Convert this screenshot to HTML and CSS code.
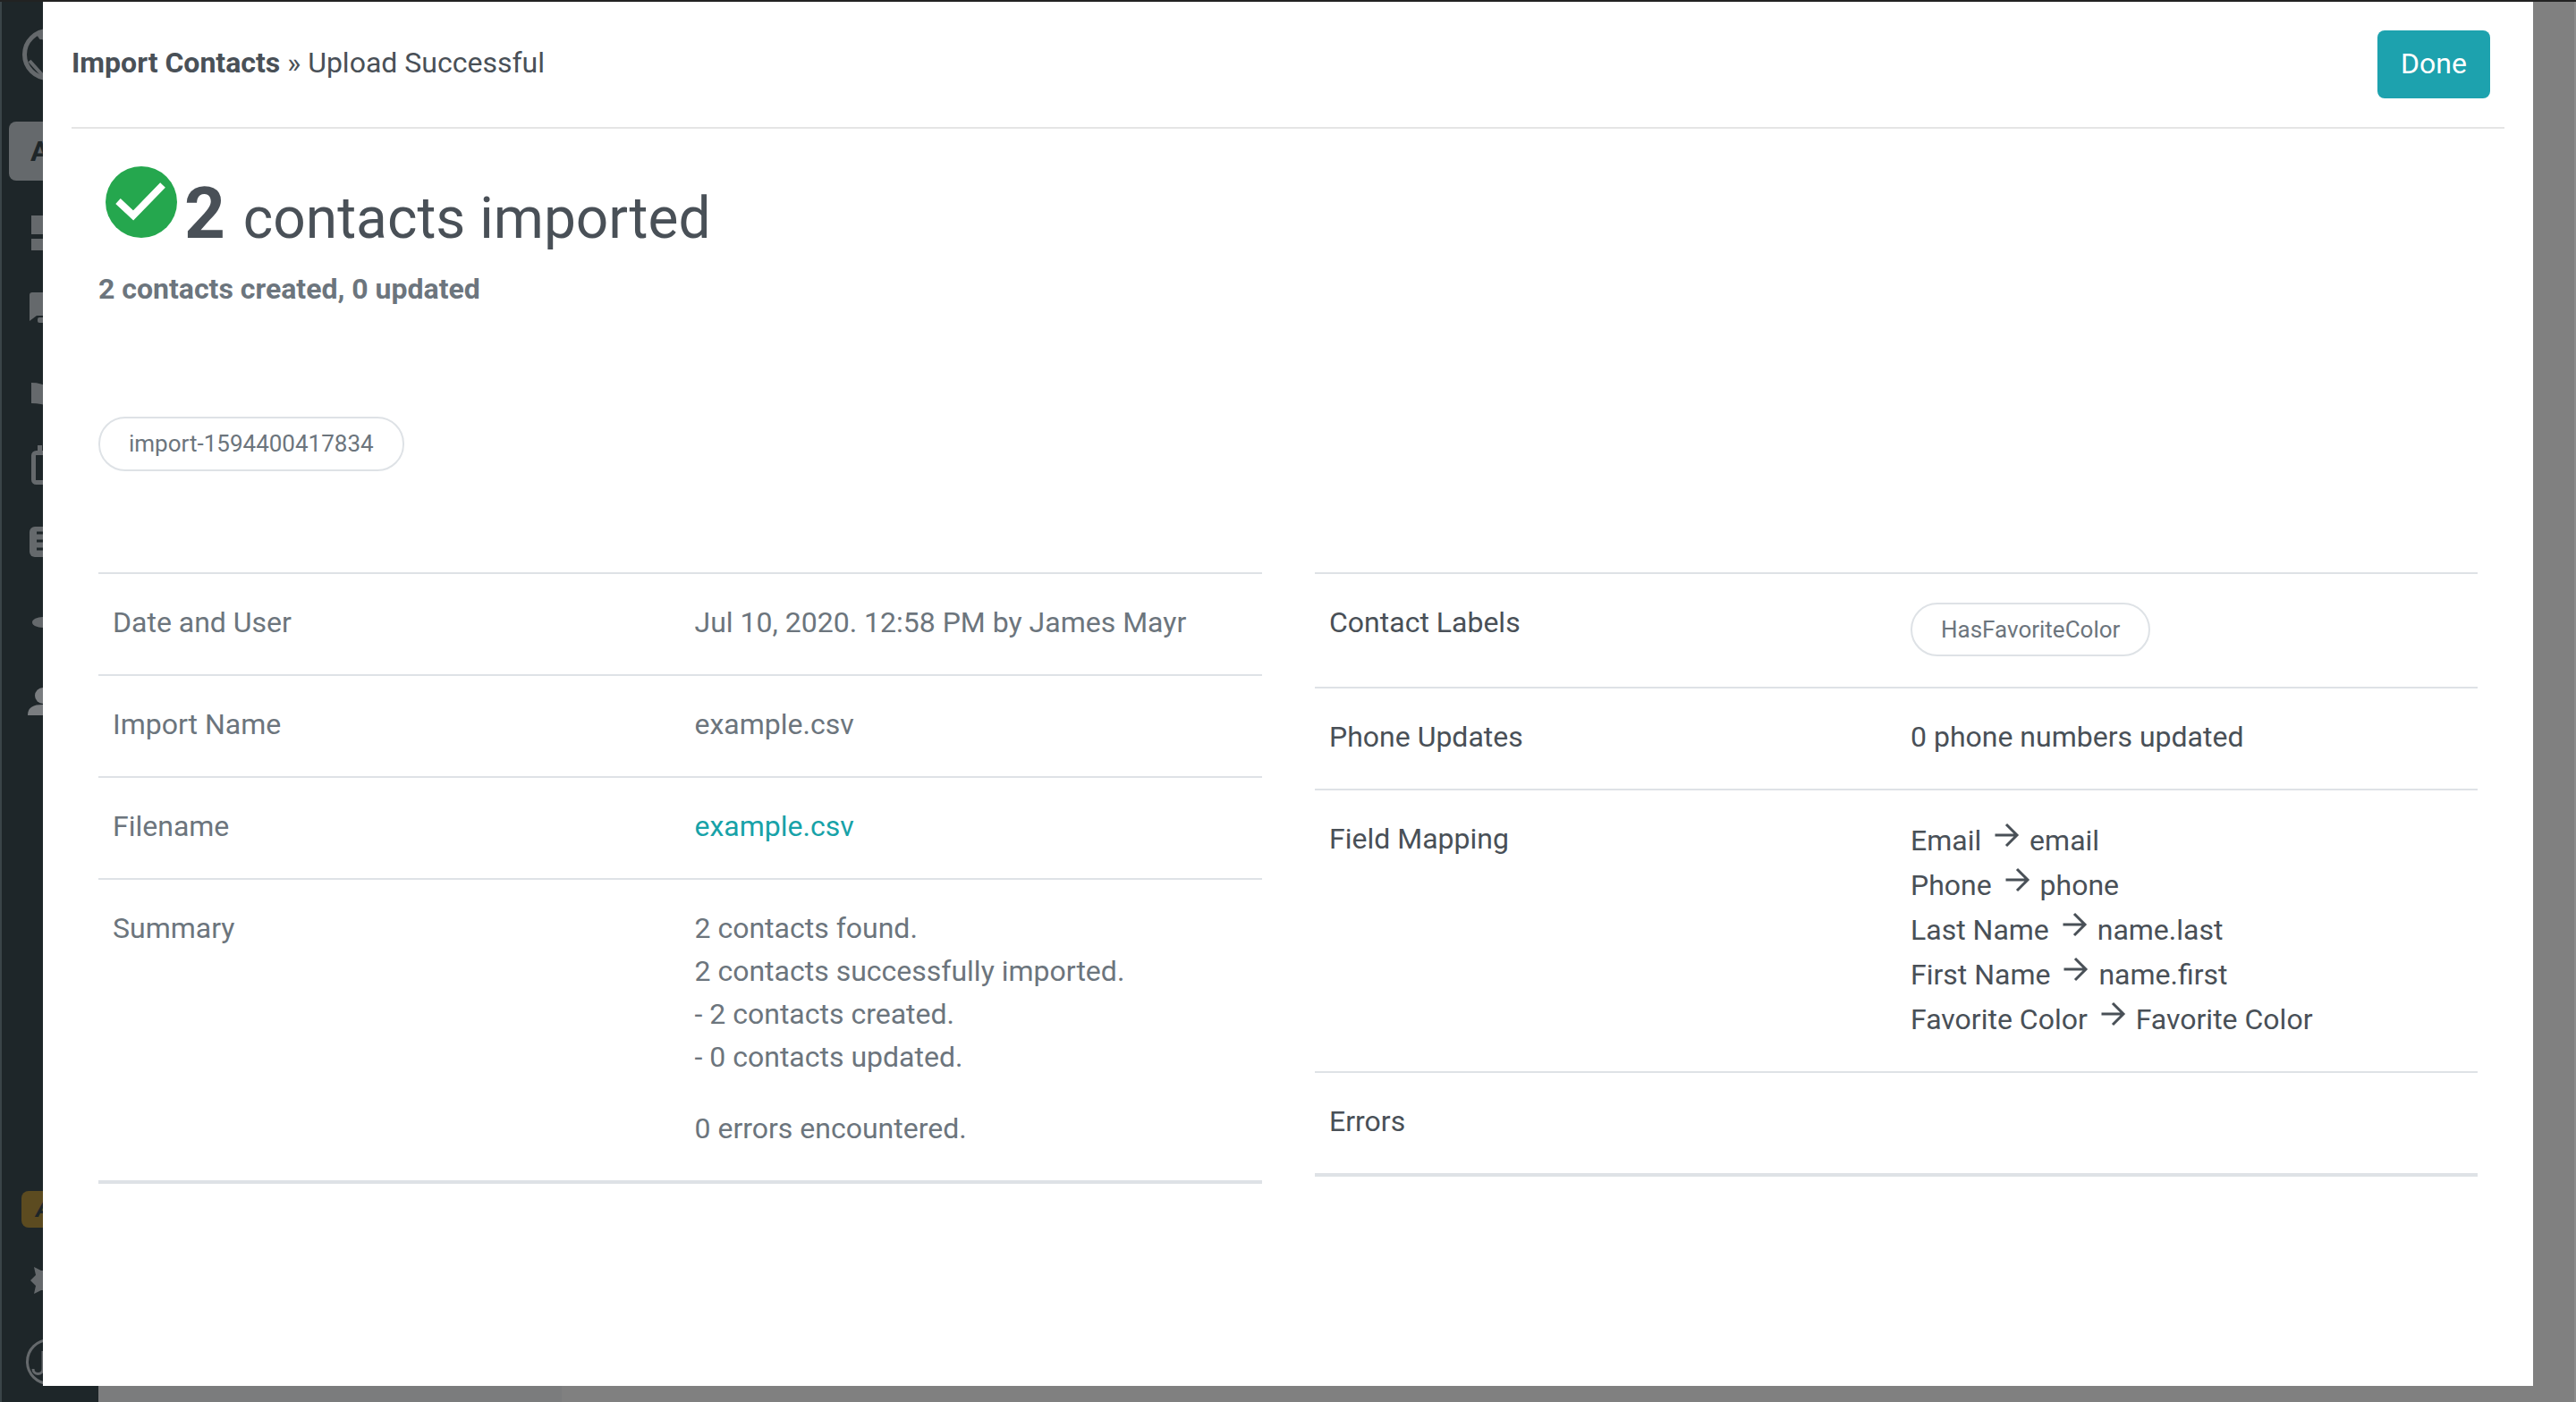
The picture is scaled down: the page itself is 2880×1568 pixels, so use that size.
FILE: index.html
```html
<!DOCTYPE html>
<html lang="en">
<head>
    <meta charset="UTF-8">
    <meta name="viewport" content="width=device-width, initial-scale=1.0">
    <title>Import Contacts - Upload Successful</title>
    <link rel="stylesheet" href="styles.css">
</head>
<body>
    <div class="topline"></div>
    <div class="app">
        <nav class="sidebar">
            <svg class="nav-logo" viewBox="0 0 58 58"><circle cx="29" cy="29" r="26.5" fill="none" stroke="#65696c" stroke-width="5"/><path d="M18 6c6 12 20 16 32 12L38 0zM8 36l18 20" fill="#65696c" stroke="#65696c" stroke-width="4"/><circle cx="21" cy="15" r="3" fill="#1e2629"/></svg>
            <div class="nav-active">A</div>
            <svg class="nav-icon icon-monitor" viewBox="0 0 44 39"><path d="M0 0h44v21H0zM0 26h44v13H0z" fill="#65696c"/></svg>
            <svg class="nav-icon icon-chat" viewBox="0 0 44 34"><path d="M0 32V3a3 3 0 0 1 3-3h41v26H8z" fill="#65696c"/><rect x="9" y="28" width="35" height="6" rx="2" fill="#65696c"/></svg>
            <svg class="nav-icon icon-book" viewBox="0 0 44 27"><path d="M0 0c8 0 14 2 20 5h24v22H20c-6-3-12-4-20-4z" fill="#65696c"/></svg>
            <svg class="nav-icon icon-calendar" viewBox="0 0 44 44"><rect x="2.5" y="8.500" width="50" height="33" rx="3" fill="none" stroke="#65696c" stroke-width="5"/><rect x="7" y="0" width="5" height="10" fill="#65696c"/></svg>
            <svg class="nav-icon icon-list" viewBox="0 0 44 34"><path d="M6 0h38v34H6a6 6 0 0 1-6-6V6a6 6 0 0 1 6-6z" fill="#65696c"/><path d="M8 7h36M8 16h36M8 25h36" stroke="#1e2629" stroke-width="3"/></svg>
            <svg class="nav-icon icon-dot" viewBox="0 0 44 12"><ellipse cx="12" cy="6" rx="12" ry="6" fill="#65696c"/></svg>
            <svg class="nav-icon icon-person" viewBox="0 0 44 31"><circle cx="17" cy="9" r="9" fill="#7a7d80"/><path d="M0 31c0-9 6-12 17-12h27v12z" fill="#7a7d80"/></svg>
            <div class="nav-spacer"></div>
            <div class="nav-badge">A</div>
            <svg class="nav-icon icon-puzzle" viewBox="0 0 44 30"><path d="M4 0l8 4h32v22H12l-8 4 2-9-6-6 6-6z" fill="#65696c"/></svg>
            <svg class="nav-user" viewBox="0 0 52 52"><circle cx="26" cy="26" r="24.500" fill="none" stroke="#65696c" stroke-width="3"/><path d="M19 14v20a5.500 5.500 0 0 1-11 0" fill="none" stroke="#65696c" stroke-width="3"/></svg>
        </nav>
        <div class="page-side"></div>
        <div class="page-main"></div>
    </div>

    <div class="modal">
        <header class="modal-header">
            <div class="crumb"><strong>Import Contacts</strong> » Upload Successful</div>
            <button class="btn">Done</button>
        </header>

        <div class="modal-body">
            <h1 class="title"><svg class="check" viewBox="0 0 80 80"><circle cx="40" cy="40" r="40" fill="#25a74e"/><path d="M14 39l17 16 33-34" fill="none" stroke="#fff" stroke-width="8"/></svg><strong>2</strong> contacts imported</h1>
            <p class="subtitle">2 contacts created, 0 updated</p>

            <div class="pill-row"><span class="pill">import-1594400417834</span></div>

            <div class="columns">
                <table class="details">
                    <tr>
                        <td>Date and User</td>
                        <td>Jul 10, 2020. 12:58 PM by James Mayr</td>
                    </tr>
                    <tr>
                        <td>Import Name</td>
                        <td>example.csv</td>
                    </tr>
                    <tr>
                        <td>Filename</td>
                        <td><a href="#">example.csv</a></td>
                    </tr>
                    <tr>
                        <td>Summary</td>
                        <td>
                            <p>2 contacts found.<br>2 contacts successfully imported.<br>- 2 contacts created.<br>- 0 contacts updated.</p>
                            <p>0 errors encountered.</p>
                        </td>
                    </tr>
                </table>

                <table class="details dark">
                    <tr>
                        <td>Contact Labels</td>
                        <td><span class="pill">HasFavoriteColor</span></td>
                    </tr>
                    <tr>
                        <td>Phone Updates</td>
                        <td>0 phone numbers updated</td>
                    </tr>
                    <tr>
                        <td>Field Mapping</td>
                        <td>
                            <div class="map">Email <svg class="arrow" viewBox="0 0 32 32"><path d="M3.500 16h24M16 4l12 12-12 12"/></svg> email</div>
                            <div class="map">Phone <svg class="arrow" viewBox="0 0 32 32"><path d="M3.500 16h24M16 4l12 12-12 12"/></svg> phone</div>
                            <div class="map">Last Name <svg class="arrow" viewBox="0 0 32 32"><path d="M3.500 16h24M16 4l12 12-12 12"/></svg> name.last</div>
                            <div class="map">First Name <svg class="arrow" viewBox="0 0 32 32"><path d="M3.500 16h24M16 4l12 12-12 12"/></svg> name.first</div>
                            <div class="map">Favorite Color <svg class="arrow" viewBox="0 0 32 32"><path d="M3.500 16h24M16 4l12 12-12 12"/></svg> Favorite Color</div>
                        </td>
                    </tr>
                    <tr>
                        <td>Errors</td>
                        <td></td>
                    </tr>
                </table>
            </div>
        </div>
    </div>
</body>
</html>
```

FILE: styles.css
```css
html, body {
    height: 100%;
}
body {
    margin: 0;
    background-color: #808080;
    font-family: Roboto, "Liberation Sans", sans-serif;
    font-size: 32px;
    line-height: 48px;
    color: #495057;
    overflow: hidden;
}
.topline {
    height: 2px;
    background-color: #222;
}
.app {
    display: flex;
    height: 1566px;
    border-right: 2px solid #8c8c8c;
}
.sidebar {
    width: 110px;
    display: flex;
    flex-direction: column;
    align-items: flex-start;
    box-sizing: border-box;
    padding-top: 30px;
    padding-left: 8px;
    background-color: #1e2629;
    border-left: 2px solid #3a4448;
    flex-shrink: 0;
    overflow: hidden;
}
.nav-logo {
    width: 58px;
    height: 58px;
    margin-left: 15px;
    flex-shrink: 0;
}
.nav-active {
    width: 92px;
    height: 66px;
    margin-top: 46px;
    padding-left: 24px;
    box-sizing: border-box;
    background-color: #65696c;
    border-radius: 8px;
    color: #1e2629;
    font-weight: 700;
    line-height: 66px;
    flex-shrink: 0;
}
.nav-icon {
    width: 44px;
    margin-left: 25px;
    flex-shrink: 0;
    overflow: visible;
}
.icon-monitor { height: 39px; margin-top: 39px; }
.icon-chat { height: 34px; margin-top: 47px; margin-left: 23px; }
.icon-book { height: 27px; margin-top: 67px; }
.icon-calendar { height: 44px; margin-top: 43px; }
.icon-list { height: 34px; margin-top: 47px; margin-left: 23px; }
.icon-dot { height: 12px; margin-top: 67px; margin-left: 26px; }
.icon-person { height: 31px; margin-top: 67px; margin-left: 21px; }
.nav-spacer {
    flex: 1;
}
.nav-badge {
    width: 80px;
    height: 41px;
    margin-left: 14px;
    padding-left: 16px;
    box-sizing: border-box;
    background-color: #5c4b20;
    border-radius: 8px;
    color: #1e2629;
    font-size: 26px;
    font-weight: 700;
    font-style: italic;
    line-height: 41px;
    flex-shrink: 0;
}
.icon-puzzle { height: 30px; margin-top: 44px; margin-left: 24px; }
.nav-user {
    width: 52px;
    height: 52px;
    margin: 50px 0 19px 19px;
    flex-shrink: 0;
}
.page-side {
    width: 518px;
    background-color: #7b7c7d;
}
.page-main {
    flex: 1;
}

.modal {
    position: absolute;
    left: 48px;
    top: 2px;
    width: 2784px;
    height: 1548px;
    padding: 0 32px;
    box-sizing: border-box;
    background-color: #fff;
}
.modal-header {
    display: flex;
    justify-content: space-between;
    align-items: center;
    height: 142px;
    padding-right: 16px;
    box-sizing: border-box;
    border-bottom: 2px solid #e5e5e5;
}
.crumb {
    margin-top: -4px;
}
.crumb strong {
    font-weight: 700;
}
.btn {
    padding: 13px 26px 15px;
    border: none;
    border-radius: 8px;
    background-color: #1da2ae;
    color: #fff;
    font-family: inherit;
    font-size: 32px;
    line-height: 48px;
    margin-top: -1px;
}
.modal-body {
    padding: 0 30px;
}
.title {
    margin: 42px 0 0;
    padding-left: 8px;
    font-size: 64px;
    font-weight: 400;
    line-height: 80px;
}
.title strong {
    font-size: 80px;
    font-weight: 700;
    margin-left: 8px;
    margin-right: 4px;
}
.check {
    width: 80px;
    height: 80px;
}
.subtitle {
    margin: 14px 0 0;
    font-weight: 700;
    color: #6c757d;
}
.pill-row {
    margin-top: 119px;
    height: 61px;
}
.pill {
    display: inline-block;
    box-sizing: border-box;
    height: 60px;
    margin-top: 2px;
    padding: 0 32px;
    border: 2px solid #dee2e6;
    border-radius: 30px;
    font-size: 26px;
    line-height: 56px;
    color: #6c757d;
    vertical-align: top;
}
.pill-row .pill {
    height: 61px;
    margin-top: 0;
    line-height: 57px;
}
.columns {
    display: grid;
    grid-template-columns: 1301px 1300px;
    column-gap: 59px;
    align-items: start;
    margin-top: 113px;
}
.details {
    width: 100%;
    table-layout: fixed;
    border-collapse: collapse;
    border-bottom: 4px solid #dee2e6;
}
.details td {
    padding: 30px 16px 34px;
    border-top: 2px solid #dee2e6;
    vertical-align: top;
}
.details td:first-child,
.details td:last-child {
    color: #6c757d;
}
.details.dark td:first-child,
.details.dark td:last-child {
    color: #495057;
}
.details p {
    margin: 0 0 32px;
}
.details p:last-child {
    margin-bottom: 0;
}
.details a {
    color: #17a2a8;
    text-decoration: none;
}
.map {
    height: 50px;
    line-height: 52px;
}
.arrow {
    width: 32px;
    height: 32px;
    margin: 0 2px 0 4px;
    fill: none;
    stroke: #495057;
    stroke-width: 3;
    vertical-align: 1px;
}
```
